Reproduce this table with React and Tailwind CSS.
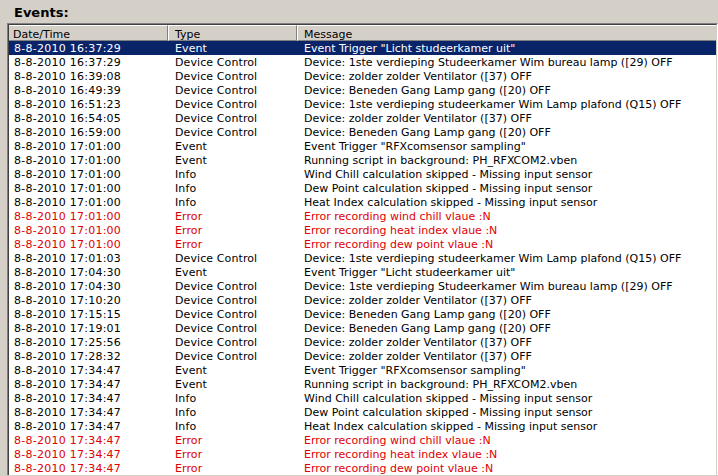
const events = [
  ["8-8-2010 16:37:29", "Event", 'Event Trigger "Licht studeerkamer uit"'],
  ["8-8-2010 16:37:29", "Device Control", "Device: 1ste verdieping Studeerkamer Wim bureau lamp ([29) OFF"],
  ["8-8-2010 16:39:08", "Device Control", "Device: zolder zolder Ventilator ([37) OFF"],
  ["8-8-2010 16:49:39", "Device Control", "Device: Beneden Gang Lamp gang ([20) OFF"],
  ["8-8-2010 16:51:23", "Device Control", "Device: 1ste verdieping studeerkamer Wim Lamp plafond (Q15) OFF"],
  ["8-8-2010 16:54:05", "Device Control", "Device: zolder zolder Ventilator ([37) OFF"],
  ["8-8-2010 16:59:00", "Device Control", "Device: Beneden Gang Lamp gang ([20) OFF"],
  ["8-8-2010 17:01:00", "Event", 'Event Trigger "RFXcomsensor sampling"'],
  ["8-8-2010 17:01:00", "Event", "Running script in background: PH_RFXCOM2.vben"],
  ["8-8-2010 17:01:00", "Info", "Wind Chill calculation skipped - Missing input sensor"],
  ["8-8-2010 17:01:00", "Info", "Dew Point calculation skipped - Missing input sensor"],
  ["8-8-2010 17:01:00", "Info", "Heat Index calculation skipped - Missing input sensor"],
  ["8-8-2010 17:01:00", "Error", "Error recording wind chill vlaue :N"],
  ["8-8-2010 17:01:00", "Error", "Error recording heat index vlaue :N"],
  ["8-8-2010 17:01:00", "Error", "Error recording dew point vlaue :N"],
  ["8-8-2010 17:01:03", "Device Control", "Device: 1ste verdieping studeerkamer Wim Lamp plafond (Q15) OFF"],
  ["8-8-2010 17:04:30", "Event", 'Event Trigger "Licht studeerkamer uit"'],
  ["8-8-2010 17:04:30", "Device Control", "Device: 1ste verdieping Studeerkamer Wim bureau lamp ([29) OFF"],
  ["8-8-2010 17:10:20", "Device Control", "Device: zolder zolder Ventilator ([37) OFF"],
  ["8-8-2010 17:15:15", "Device Control", "Device: Beneden Gang Lamp gang ([20) OFF"],
  ["8-8-2010 17:19:01", "Device Control", "Device: Beneden Gang Lamp gang ([20) OFF"],
  ["8-8-2010 17:25:56", "Device Control", "Device: zolder zolder Ventilator ([37) OFF"],
  ["8-8-2010 17:28:32", "Device Control", "Device: zolder zolder Ventilator ([37) OFF"],
  ["8-8-2010 17:34:47", "Event", 'Event Trigger "RFXcomsensor sampling"'],
  ["8-8-2010 17:34:47", "Event", "Running script in background: PH_RFXCOM2.vben"],
  ["8-8-2010 17:34:47", "Info", "Wind Chill calculation skipped - Missing input sensor"],
  ["8-8-2010 17:34:47", "Info", "Dew Point calculation skipped - Missing input sensor"],
  ["8-8-2010 17:34:47", "Info", "Heat Index calculation skipped - Missing input sensor"],
  ["8-8-2010 17:34:47", "Error", "Error recording wind chill vlaue :N"],
  ["8-8-2010 17:34:47", "Error", "Error recording heat index vlaue :N"],
  ["8-8-2010 17:34:47", "Error", "Error recording dew point vlaue :N"],
];

const HeaderCell = ({ children, className = "" }) => (
  <div
    className={`h-[16px] box-border pt-[2px] leading-[13px] border-t border-l border-t-white border-l-white border-b border-b-[#808080] whitespace-nowrap ${className}`}
  >
    {children}
  </div>
);

const App = () => {
  const selected = 0;

  return (
    <div className="w-[718px] h-[476px] overflow-hidden bg-[#d4d0c8] text-black font-['DejaVu_Sans',Verdana,sans-serif] text-[11px]">
      <div className="h-[23px] box-border pl-[14px] pt-[5px] text-[13px] leading-[15px] font-bold">
        Events:
      </div>
      <div className="ml-[7px] w-[711px] border-l border-t border-l-[#808080] border-t-[#808080] border-r border-r-white">
        <div className="border-l border-t border-l-[#404040] border-t-[#404040] border-r border-r-[#d4d0c8] bg-white">
          <div className="flex bg-[#d4d0c8]">
            <HeaderCell className="w-[159px] pl-[4px] border-r border-r-[#808080] border-l-0">
              Date/Time
            </HeaderCell>
            <HeaderCell className="w-[129px] pl-[6px] border-r border-r-[#808080]">
              Type
            </HeaderCell>
            <HeaderCell className="flex-1 pl-[6px]">Message</HeaderCell>
          </div>
          {events.map(([date, type, message], i) => {
            const isError = type === "Error";
            const isSelected = i === selected;
            return (
              <div
                key={i}
                className={`flex h-[14px] box-border pt-[2px] leading-[12px] whitespace-nowrap ${
                  isSelected
                    ? "bg-[#0a246a] text-white"
                    : isError
                    ? "text-[#e00000]"
                    : "text-black"
                }`}
              >
                <div className="w-[159px] pl-[5px] tracking-[0.25px]">{date}</div>
                <div className="w-[129px] pl-[7px] tracking-[0.1px]">{type}</div>
                <div className="flex-1 pl-[7px] overflow-hidden">{message}</div>
              </div>
            );
          })}
        </div>
      </div>
    </div>
  );
};

export default App;
